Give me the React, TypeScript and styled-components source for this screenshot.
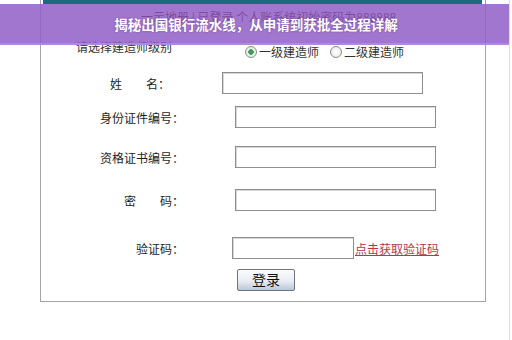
import styled, { createGlobalStyle } from "styled-components";

const GlobalStyle = createGlobalStyle`
    html, body {
        margin: 0;
        padding: 0;
        background: #ffffff;
    }
    body {
        font-family: "Noto Sans CJK SC", "Liberation Sans", sans-serif;
        color: #333;
    }
`

const Page = styled.div`
    position: relative;
    width: 510px;
    height: 340px;
    padding-left: 40px;
    box-sizing: border-box;
    border-right: 1px solid #cfe3e6;
    overflow: hidden;
`

const Panel = styled.div`
    width: 446px;
    height: 302px;
    box-sizing: border-box;
    border: 1px solid #a4a4a4;
    border-top: none;
    display: flex;
    flex-direction: column;
`

const TopStrip = styled.div`
    height: 4px;
    margin: 0 3px 0 2px;
    background: #1c6b7d;
`

// sits under the banner, only the banner's ghost copy of it shows
const NoticeSpace = styled.div`
    height: 24px;
`

const LevelRow = styled.div`
    display: flex;
    align-items: flex-start;
    padding-left: 35px;
    margin-top: 12px;
    font-size: 12px;
    line-height: 14px;
`

const LevelLabel = styled.span`
    width: 169px;
    color: #333;
`

const RadioGroup = styled.div`
    display: flex;
    align-items: center;
    gap: 2px;
    margin-top: 5px;
    color: #333;
`

const Radio = styled.span<{ $checked?: boolean }>`
    width: 10px;
    height: 10px;
    border-radius: 50%;
    border: 1px solid #8c8c8c;
    background: ${props => props.$checked ? 'radial-gradient(circle, #3f9a5c 0 2.5px, #e4f2e6 3px)' : 'radial-gradient(circle, #ffffff, #e6e6e6)'};
    margin-left: ${props => props.$checked ? '0' : '9px'};
`

const FormRow = styled.div<{ $top: number; $shift?: number }>`
    display: flex;
    align-items: center;
    height: 22px;
    margin-top: ${props => props.$top}px;
    margin-left: ${props => props.$shift ?? 0}px;
`

const Label = styled.label`
    width: 143px;
    text-align: right;
    font-size: 12px;
    color: #1e1e1e;
    white-space: pre;
`

const Input = styled.input<{ $gap: number; $width: number }>`
    width: ${props => props.$width}px;
    height: 22px;
    box-sizing: border-box;
    margin: 0 0 0 ${props => props.$gap}px;
    padding: 0 4px;
    border: 1px solid #8e8e8e;
    box-shadow: inset 1px 1px 0 #d8d8d8;
    background: #fff;
    outline: none;
`

const CodeLink = styled.a`
    margin-left: 1px;
    font-size: 12px;
    color: #b3364c;
    text-decoration: underline;
    cursor: pointer;
`

const ButtonRow = styled.div`
    padding-left: 196px;
    margin-top: 7px;
`

const LoginButton = styled.button`
    width: 58px;
    height: 22px;
    padding: 0;
    border: 1px solid #6c7486;
    border-radius: 2px;
    background: linear-gradient(#fbfcfd, #e9edf3 55%, #bac6d8);
    font-family: "Noto Sans CJK SC", sans-serif;
    font-size: 14px;
    line-height: 19px;
    color: #111;
`

const Banner = styled.div`
    position: absolute;
    top: 4px;
    left: 0;
    width: 512px;
    height: 41px;
    box-sizing: border-box;
    background: rgba(146, 96, 198, 0.86);
    border-bottom: 2px solid rgba(178, 140, 220, 0.9);
    display: flex;
    align-items: center;
    justify-content: center;
`

const GhostNotice = styled.span`
    position: absolute;
    top: 6px;
    left: 141px;
    font-size: 12px;
    line-height: 14px;
    color: rgba(80, 20, 90, 0.45);
    white-space: nowrap;
`

const Title = styled.h1`
    position: relative;
    margin: 0;
    font-size: 13.5px;
    font-weight: 700;
    color: #fff;
    text-shadow: 0 0 2px rgba(80, 40, 120, 0.6);
`

function App() {
    return (
        <>
            <GlobalStyle />
            <Page>
                <Panel>
                    <TopStrip />
                    <NoticeSpace />
                    <LevelRow>
                        <LevelLabel>请选择建造师级别</LevelLabel>
                        <RadioGroup>
                            <Radio $checked />
                            <span>一级建造师</span>
                            <Radio />
                            <span>二级建造师</span>
                        </RadioGroup>
                    </LevelRow>
                    <FormRow $top={13} $shift={-14}>
                        <Label>{"姓　　名："}</Label>
                        <Input $gap={52} $width={201} />
                    </FormRow>
                    <FormRow $top={12}>
                        <Label>身份证件编号：</Label>
                        <Input $gap={51} $width={201} />
                    </FormRow>
                    <FormRow $top={18}>
                        <Label>资格证书编号：</Label>
                        <Input $gap={51} $width={201} />
                    </FormRow>
                    <FormRow $top={21}>
                        <Label>{"密　　码："}</Label>
                        <Input $gap={51} $width={201} />
                    </FormRow>
                    <FormRow $top={26}>
                        <Label>验证码：</Label>
                        <Input $gap={48} $width={122} />
                        <CodeLink>点击获取验证码</CodeLink>
                    </FormRow>
                    <ButtonRow>
                        <LoginButton>登录</LoginButton>
                    </ButtonRow>
                </Panel>
                <Banner>
                    <GhostNotice>一示地册 | 已登录 个人账系统初始密码为888888</GhostNotice>
                    <Title>揭秘出国银行流水线，从申请到获批全过程详解</Title>
                </Banner>
            </Page>
        </>
    )
}

export default App;
